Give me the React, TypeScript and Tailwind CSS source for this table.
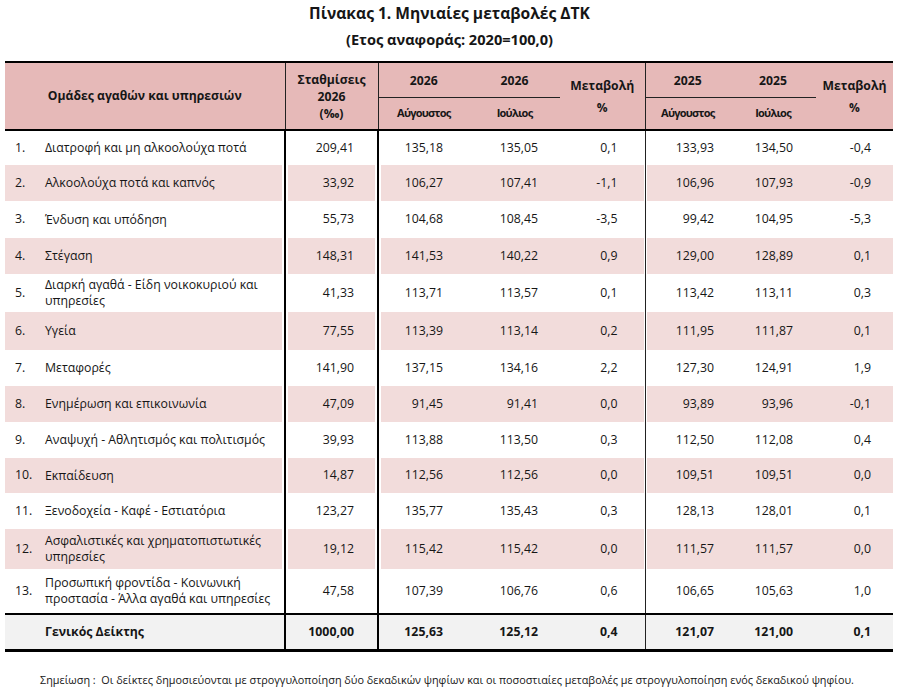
import React from "react";

type Row = {
  n: string;
  name: React.ReactNode;
  v: string[];
  h: string;
};

const rows: Row[] = [
  { n: "1.", name: "Διατροφή και μη αλκοολούχα ποτά", v: ["209,41", "135,18", "135,05", "0,1", "133,93", "134,50", "-0,4"], h: "h-[35px]" },
  { n: "2.", name: "Αλκοολούχα ποτά και καπνός", v: ["33,92", "106,27", "107,41", "-1,1", "106,96", "107,93", "-0,9"], h: "h-[36px]" },
  { n: "3.", name: "Ένδυση και υπόδηση", v: ["55,73", "104,68", "108,45", "-3,5", "99,42", "104,95", "-5,3"], h: "h-[37px]" },
  { n: "4.", name: "Στέγαση", v: ["148,31", "141,53", "140,22", "0,9", "129,00", "128,89", "0,1"], h: "h-[36px]" },
  { n: "5.", name: (<>Διαρκή αγαθά - Είδη νοικοκυριού και<br />υπηρεσίες</>), v: ["41,33", "113,71", "113,57", "0,1", "113,42", "113,11", "0,3"], h: "h-[38px]" },
  { n: "6.", name: "Υγεία", v: ["77,55", "113,39", "113,14", "0,2", "111,95", "111,87", "0,1"], h: "h-[38px]" },
  { n: "7.", name: "Μεταφορές", v: ["141,90", "137,15", "134,16", "2,2", "127,30", "124,91", "1,9"], h: "h-[36px]" },
  { n: "8.", name: "Ενημέρωση και επικοινωνία", v: ["47,09", "91,45", "91,41", "0,0", "93,89", "93,96", "-0,1"], h: "h-[36px]" },
  { n: "9.", name: "Αναψυχή - Αθλητισμός και πολιτισμός", v: ["39,93", "113,88", "113,50", "0,3", "112,50", "112,08", "0,4"], h: "h-[36px]" },
  { n: "10.", name: "Εκπαίδευση", v: ["14,87", "112,56", "112,56", "0,0", "109,51", "109,51", "0,0"], h: "h-[35px]" },
  { n: "11.", name: "Ξενοδοχεία - Καφέ - Εστιατόρια", v: ["123,27", "135,77", "135,43", "0,3", "128,13", "128,01", "0,1"], h: "h-[36px]" },
  { n: "12.", name: (<>Ασφαλιστικές και χρηματοπιστωτικές<br />υπηρεσίες</>), v: ["19,12", "115,42", "115,42", "0,0", "111,57", "111,57", "0,0"], h: "h-[40px]" },
  { n: "13.", name: (<>Προσωπική φροντίδα - Κοινωνική<br />προστασία - Άλλα αγαθά και υπηρεσίες</>), v: ["47,58", "107,39", "106,76", "0,6", "106,65", "105,63", "1,0"], h: "h-[45px]" },
];

const valCls = [
  "pr-[23px] border-l-2 border-black shadow-[inset_2px_0_0_#fff,inset_-2px_0_0_#fff]",
  "pr-[26px] border-l-2 border-black shadow-[inset_2px_0_0_#fff]",
  "pr-[22px]",
  "pr-[27px] shadow-[inset_-1px_0_0_#fff]",
  "pr-[16px] border-l border-[#222] shadow-[inset_1px_0_0_#fff]",
  "pr-[23px]",
  "pr-[22px]",
];

const totalCls = [
  "pr-[23px] border-l-2 border-black",
  "pr-[26px] border-l-2 border-black",
  "pr-[22px]",
  "pr-[27px]",
  "pr-[16px] border-l border-[#222]",
  "pr-[23px]",
  "pr-[22px]",
];

export default function App() {
  return (
    <div className="w-[899px] h-[697px] bg-white text-[#161616] font-['Open_Sans',sans-serif] px-[5px] pt-[3px]">
      <div className="text-center font-bold text-[15.6px] leading-[21px]">Πίνακας 1. Μηνιαίες μεταβολές ΔΤΚ</div>
      <div className="text-center font-bold text-[14.6px] leading-[20px] mt-[5px]">(Ετος αναφοράς: 2020=100,0)</div>
      <table className="mt-[12px] w-[888px] table-fixed border-collapse">
        <colgroup>
          <col className="w-[280px]" />
          <col className="w-[93px]" />
          <col className="w-[91px]" />
          <col className="w-[91px]" />
          <col className="w-[85px]" />
          <col className="w-[85px]" />
          <col className="w-[86px]" />
          <col className="w-[77px]" />
        </colgroup>
        <thead>
          <tr className="h-[35px] bg-[#e6b9b8] border-t-2 border-black font-bold text-[12.2px]">
            <th rowSpan={2} className="text-center align-middle font-bold p-0">Ομάδες αγαθών και υπηρεσιών</th>
            <th rowSpan={2} className="text-center align-middle font-bold leading-[17px] border-l border-[#222] p-0">
              Σταθμίσεις<br />2026<br />(‰)
            </th>
            <th className="text-center align-middle font-bold border-l border-[#222] border-b border-b-[#222] p-0 pt-[2px]">2026</th>
            <th className="text-center align-middle font-bold border-b border-b-[#222] p-0 pt-[2px]">2026</th>
            <th className="text-center align-bottom font-bold p-0 pb-[2px]">Μεταβολή</th>
            <th className="text-center align-middle font-bold border-l border-[#222] border-b border-b-[#222] p-0 pt-[2px]">2025</th>
            <th className="text-center align-middle font-bold border-b border-b-[#222] p-0 pt-[2px]">2025</th>
            <th className="text-center align-bottom font-bold p-0 pb-[2px]">Μεταβολή</th>
          </tr>
          <tr className="h-[33px] bg-[#e6b9b8] font-bold text-[11px] border-b-2 border-black">
            <th className="text-center align-middle font-bold tracking-[-0.07em] border-l border-[#222] p-0">Αύγουστος</th>
            <th className="text-center align-middle font-bold tracking-[-0.07em] p-0">Ιούλιος</th>
            <th className="text-center align-top font-bold text-[12px] p-0 pt-[2px]">%</th>
            <th className="text-center align-middle font-bold tracking-[-0.07em] border-l border-[#222] p-0">Αύγουστος</th>
            <th className="text-center align-middle font-bold tracking-[-0.07em] p-0">Ιούλιος</th>
            <th className="text-center align-top font-bold text-[12px] p-0 pt-[2px]">%</th>
          </tr>
        </thead>
        <tbody className="text-[12.3px]">
          {rows.map((r, i) => (
            <tr key={r.n} className={`${r.h} ${i % 2 === 1 ? "bg-[#f2dcdb]" : "bg-white"}`}>
              <td className="p-0 align-middle shadow-[inset_-2px_0_0_#fff]">
                <div className="flex items-center">
                  <span className="w-[40px] pl-[10px] shrink-0">{r.n}</span>
                  <span className="leading-[16px] whitespace-nowrap">{r.name}</span>
                </div>
              </td>
              {r.v.map((v, j) => (
                <td key={j} className={`p-0 align-middle text-right ${valCls[j]}`}>{v}</td>
              ))}
            </tr>
          ))}
          <tr className="h-[36px] bg-[#f2f2f2] border-t-2 border-b-[3px] border-black font-bold">
            <td className="p-0 align-middle">
              <div className="flex items-center">
                <span className="w-[40px] shrink-0"></span>
                <span>Γενικός Δείκτης</span>
              </div>
            </td>
            {["1000,00", "125,63", "125,12", "0,4", "121,07", "121,00", "0,1"].map((v, j) => (
              <td key={j} className={`p-0 align-middle text-right ${totalCls[j]}`}>{v}</td>
            ))}
          </tr>
        </tbody>
      </table>
      <div className="mt-[21px] pl-[35px] text-[10.85px] leading-[14px] whitespace-nowrap">
        Σημείωση :&nbsp; Οι δείκτες δημοσιεύονται με στρογγυλοποίηση δύο δεκαδικών ψηφίων και οι ποσοστιαίες μεταβολές με στρογγυλοποίηση ενός δεκαδικού ψηφίου.
      </div>
    </div>
  );
}
